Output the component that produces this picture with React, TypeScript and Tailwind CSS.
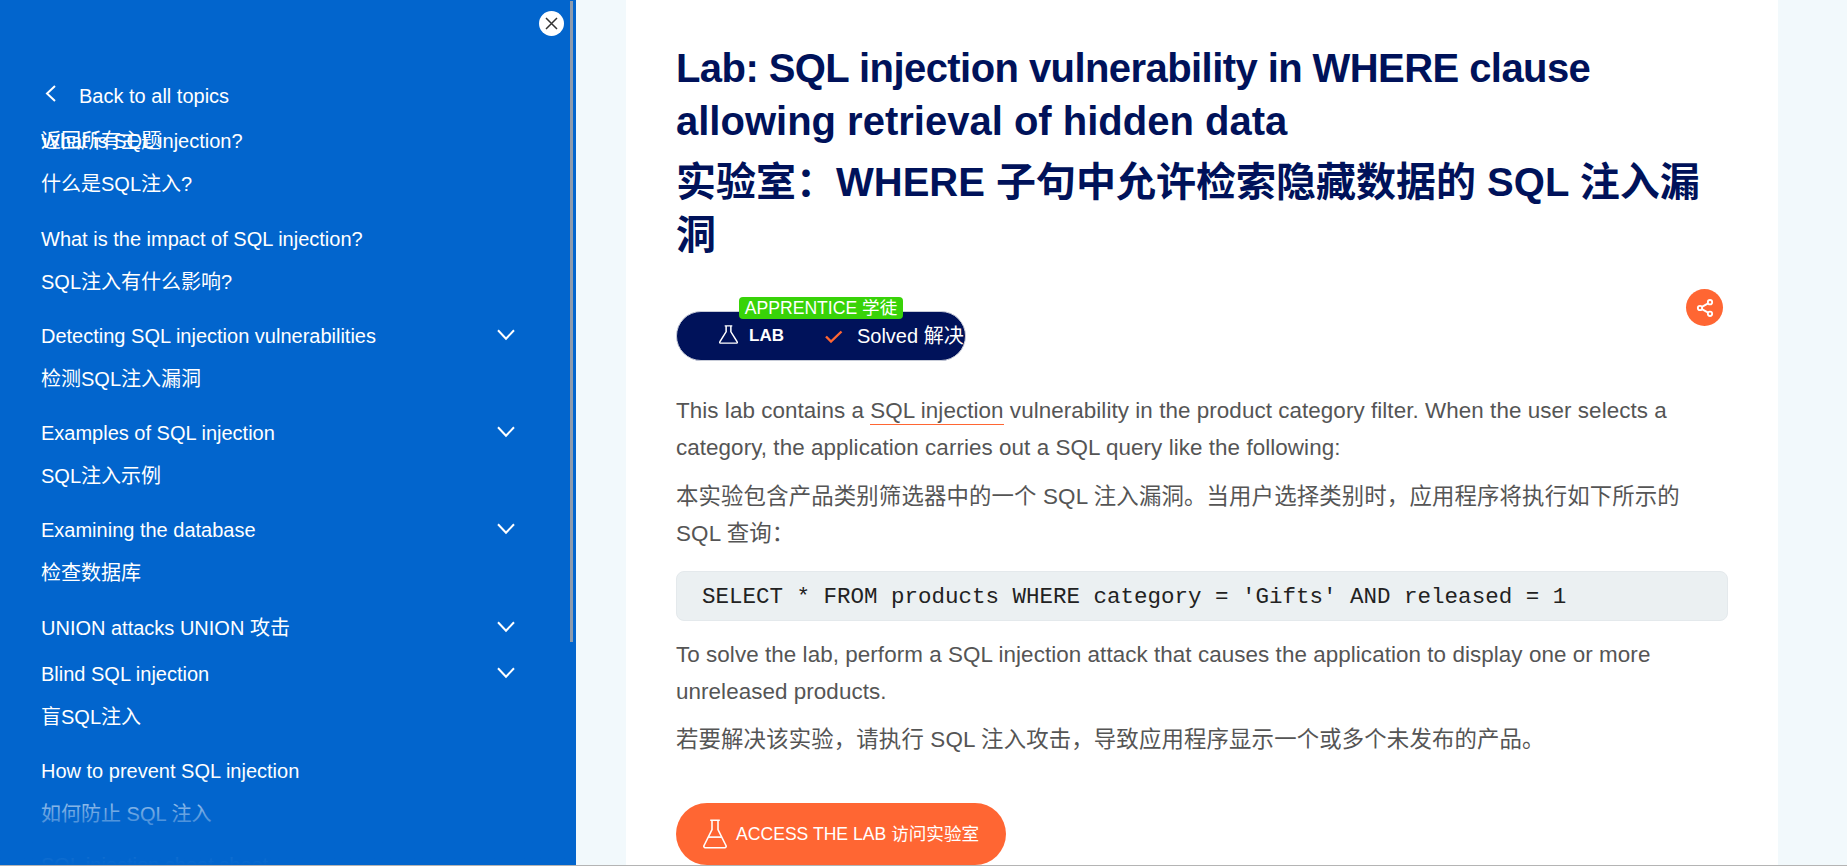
import React from "react";

const sans = "font-['Liberation_Sans','Noto_Sans_CJK_SC',sans-serif]";

function Chevron() {
  return (
    <svg width="18" height="12" viewBox="0 0 18 12" fill="none" stroke="white" strokeWidth="2" className="shrink-0">
      <path d="M1 1.2 L9 9.8 L17 1.2" />
    </svg>
  );
}

function Flask({ w = 20, h = 24, sw = 1.6, line = true }: { w?: number; h?: number; sw?: number; line?: boolean }) {
  return (
    <svg width={w} height={h} viewBox="0 0 20 24" fill="none" stroke="white" strokeWidth={sw} strokeLinejoin="round" preserveAspectRatio="none">
      <path d="M6 1h8M7.5 1v7.5L1 21a1.2 1.2 0 0 0 1 2h16a1.2 1.2 0 0 0 1-2L12.5 8.5V1" />
      {line && <path d="M4.5 14.5h11" />}
    </svg>
  );
}

function NavItem({ en, zh, chevron, className = "" }: { en: string; zh?: string; chevron?: boolean; className?: string }) {
  return (
    <div className={className}>
      <div className="flex items-start justify-between h-[43px] pt-[2px] leading-[24px]">
        <span>{en}</span>
        {chevron && <span className="mt-[5px]"><Chevron /></span>}
      </div>
      {zh && <div className="h-[43px] pt-[2px] leading-[24px]">{zh}</div>}
    </div>
  );
}

export default function App() {
  return (
    <div className={`flex h-[866px] w-[1847px] overflow-hidden bg-[#f2f9fc] border-b border-[#b4b4b4] ${sans}`}>
      <aside className="relative w-[576px] shrink-0 bg-[#0265cd] text-white text-[20px] pl-[41px] pr-[61px] overflow-hidden">
        <button className="absolute left-[539px] top-[11px] w-[25px] h-[25px] rounded-full bg-white flex items-center justify-center">
          <svg width="13" height="13" viewBox="0 0 13 13" stroke="#333" strokeWidth="1.5" fill="none"><path d="M1 1l11 11M12 1L1 12" /></svg>
        </button>
        <div className="absolute left-[570px] top-[1px] w-[3px] h-[641px] bg-[#8d9bad]" />

        <div className="flex items-center h-[24px] mt-[84px] leading-[24px]">
          <svg width="12" height="17" viewBox="0 0 12 17" fill="none" stroke="white" strokeWidth="2" className="ml-[4px] mr-[22px] mt-[-5px]"><path d="M10 1 L2 8.5 L10 16" /></svg>
          <span>Back to all topics</span>
        </div>
        <div className="mt-[21px] h-[24px] leading-[24px]">返回所有主题</div>
        <NavItem className="mt-[-26px]" en="What is SQL injection?" zh="什么是SQL注入?" />
        <NavItem className="mt-[12px]" en="What is the impact of SQL injection?" zh="SQL注入有什么影响?" />
        <NavItem className="mt-[11px]" en="Detecting SQL injection vulnerabilities" zh="检测SQL注入漏洞" chevron />
        <NavItem className="mt-[11px]" en="Examples of SQL injection" zh="SQL注入示例" chevron />
        <NavItem className="mt-[11px]" en="Examining the database" zh="检查数据库" chevron />
        <NavItem className="mt-[12px]" en="UNION attacks UNION 攻击" chevron />
        <NavItem className="mt-[3px]" en="Blind SQL injection" zh="盲SQL注入" chevron />
        <NavItem className="mt-[11px]" en="How to prevent SQL injection" zh="如何防止 SQL 注入" />
        <NavItem className="mt-[8px]" en="SQL injection cheat sheet" />
        <div className="absolute left-0 right-[6px] bottom-0 h-[90px] bg-gradient-to-b from-[#0265cd00] via-[#0265cdb0] to-[#0265cd]" />
      </aside>

      <div className="w-[50px] shrink-0" />

      <main className="w-[1152px] shrink-0 bg-white pl-[50px] pr-[50px] pt-[42px] overflow-hidden">
        <h1 className="text-[40px] tracking-[-0.57px] font-bold leading-[53px] text-[#00125a]">
          Lab: SQL injection vulnerability in WHERE clause <span className="tracking-normal">allowing retrieval of hidden data</span>
        </h1>
        <h1 className="text-[40px] font-bold leading-[53px] text-[#00125a] mt-[8px]">
          实验室：WHERE 子句中允许检索隐藏数据的 SQL 注入漏洞
        </h1>

        <div className="relative h-[64px] mt-[35px] flex items-end">
          <div className="w-[290px] h-[50px] rounded-[25px] bg-[#00125a] border border-[#c8ccd8] text-white flex items-center overflow-hidden">
            <span className="ml-[42px] mb-[3px]"><Flask w={19} h={19} sw={1.6} line={false} /></span>
            <span className="ml-[11px] text-[17px] font-bold">LAB</span>
            <svg width="18" height="13" viewBox="0 0 18 13" fill="none" stroke="#ff6633" strokeWidth="2.4" className="ml-[41px] mt-[1px]"><path d="M1 6.5l5 5L16.5 1.5" /></svg>
            <span className="ml-[14px] text-[20px] whitespace-nowrap">Solved 解决</span>
          </div>
          <div className="absolute left-[63px] top-0 w-[164px] h-[22px] rounded-[4px] bg-[#38d308] text-white text-[17.6px] leading-[22px] text-center whitespace-nowrap">APPRENTICE 学徒</div>
          <div className="absolute right-[5px] top-[-8px] w-[37px] h-[37px] rounded-full bg-[#ff6633] flex items-center justify-center">
            <svg width="20" height="20" viewBox="0 0 24 24" fill="none" stroke="white" strokeWidth="2.2"><circle cx="18" cy="5" r="2.6"/><circle cx="6" cy="12" r="2.6"/><circle cx="18" cy="19" r="2.6"/><path d="M8.3 13.4l7.4 4.2M15.7 6.4l-7.4 4.2"/></svg>
          </div>
        </div>

        <div className="text-[22.4px] leading-[37px] text-[#555] mt-[31px]">
          <p className="tracking-[0.07px]">
            This lab contains a <span className="border-b border-[#ff6633] pb-[1px]">SQL injection</span> vulnerability in the product category filter. When the user selects a category, the application carries out a SQL query like the following:
          </p>
          <p className="mt-[12px] tracking-[0.15px]">本实验包含产品类别筛选器中的一个 SQL 注入漏洞。当用户选择类别时，应用程序将执行如下所示的<br />SQL 查询：</p>
          <pre className="mt-[19px] h-[50px] rounded-[8px] bg-[#ebf0f2] border border-[#e4e9ec] pl-[25px] text-[22.5px] leading-[51px] text-[#222] font-['Liberation_Mono',monospace]">SELECT * FROM products WHERE category = 'Gifts' AND released = 1</pre>
          <p className="mt-[15px] tracking-[0.07px]">To solve the lab, perform a SQL injection attack that causes the application to display one or more unreleased products.</p>
          <p className="mt-[11px] tracking-[0.15px]">若要解决该实验，请执行 SQL 注入攻击，导致应用程序显示一个或多个未发布的产品。</p>
        </div>

        <button className="mt-[45px] w-[330px] h-[62px] rounded-[31px] bg-[#ff6633] text-white text-[17.6px] flex items-center pl-[27px] whitespace-nowrap">
          <Flask w={24} h={30} sw={1.3} />
          <span className="ml-[9px]">ACCESS THE LAB 访问实验室</span>
        </button>
      </main>
    </div>
  );
}
